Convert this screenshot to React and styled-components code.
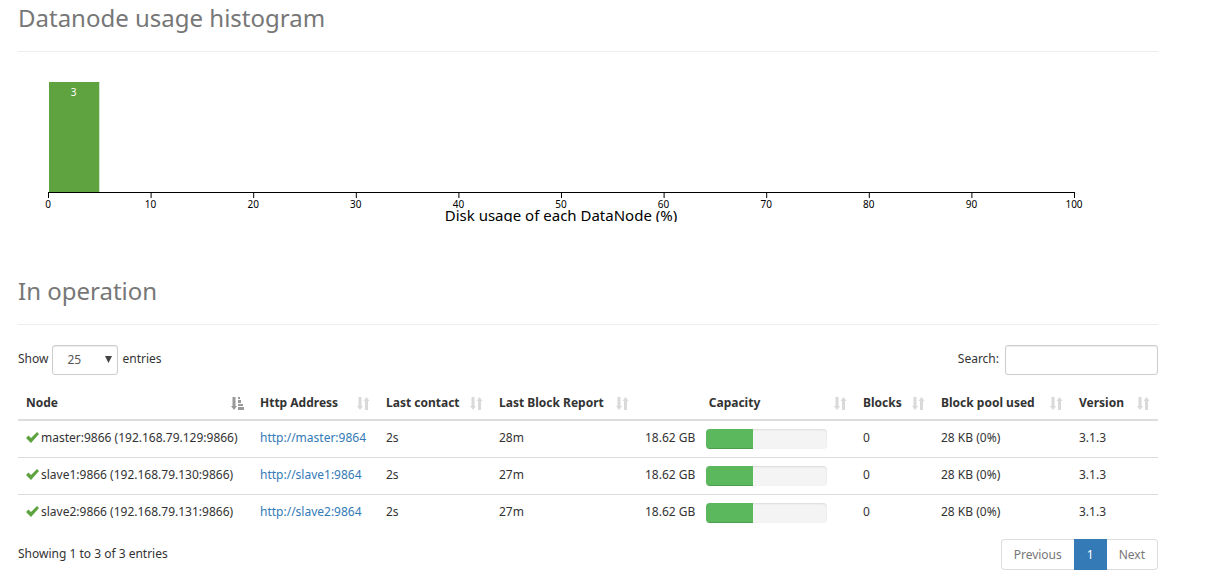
import React, { useState } from "react";
import styled, { createGlobalStyle } from "styled-components";

const GlobalStyle = createGlobalStyle`
  *, *::before, *::after { box-sizing: border-box; }
  body {
    margin: 0;
    background: #fff;
    color: #333;
    font-family: "Noto Sans", "Open Sans", sans-serif;
    font-size: 12px;
    line-height: 20px;
  }
  button, input, select { font: inherit; color: inherit; margin: 0; }
`;

const Page = styled.main`
  padding: 0 73px 6px 18px;
`;

const PageHeader = styled.h1`
  margin: 0 0 20px;
  padding-bottom: 16px;
  border-bottom: 1px solid #eee;
  color: #777;
  font-size: 24px;
  font-weight: 400;
  line-height: 35px;
`;

const ChartArea = styled.figure`
  margin: 0 0 51px;
`;

const Chart = styled.svg`
  display: block;
  width: 100%;
  height: 150px;
  overflow: hidden;
`;

const Plot = styled.svg`
  overflow: visible;
`;

const TickText = styled.text`
  font-size: 10px;
  text-anchor: middle;
  fill: ${(p) => (p.$light ? "#fff" : "#000")};
`;

const AxisTitle = styled.text`
  font-size: 15px;
  text-anchor: middle;
  fill: #000;
`;

const Controls = styled.div`
  display: flex;
  justify-content: space-between;
  align-items: flex-start;
`;

const ControlLabel = styled.label`
  display: flex;
  align-items: flex-start;
  gap: ${(p) => p.$gap}px;
  line-height: 28px;
`;

const SelectBox = styled.span`
  position: relative;
  display: inline-flex;
`;

const LengthSelect = styled.select`
  appearance: none;
  width: 66px;
  height: 30px;
  padding: 0 14px;
  border: 1px solid #ccc;
  border-radius: 3px;
  background: #fff;
  color: #555;
  box-shadow: inset 0 1px 1px rgba(0, 0, 0, 0.075);
`;

const Caret = styled.svg`
  position: absolute;
  right: 6px;
  top: 11px;
  width: 7px;
  height: 7px;
  fill: #444;
  pointer-events: none;
`;

const SearchInput = styled.input`
  width: 153px;
  height: 30px;
  padding: 4px 10px;
  border: 1px solid #ccc;
  border-radius: 3px;
  background: #fff;
  box-shadow: inset 0 1px 1px rgba(0, 0, 0, 0.075);
`;

const Table = styled.table`
  width: 100%;
  margin: 8px 0;
  table-layout: fixed;
  border-collapse: collapse;
`;

const Th = styled.th`
  padding: 10px 8px 6px;
  border-bottom: 2px solid #ddd;
  text-align: left;
  font-weight: 700;
  line-height: 20px;
  white-space: nowrap;
`;

const SortButton = styled.button`
  display: flex;
  align-items: center;
  justify-content: space-between;
  width: 100%;
  padding: 0;
  border: 0;
  background: none;
  cursor: pointer;
  line-height: 20px;
`;

const SortTitle = styled.span`
  flex: 1;
  padding-right: ${(p) => (p.$center ? 10 : 0)}px;
  text-align: ${(p) => (p.$center ? "center" : "left")};
`;

const SortSvg = styled.svg`
  flex: none;
  width: 13px;
  height: 13px;
  fill: ${(p) => (p.$active ? "#999" : "#d9d9d9")};
`;

const Td = styled.td`
  padding: 7px 8px;
  border-top: 1px solid #ddd;
  vertical-align: top;
  white-space: nowrap;
  line-height: 20px;
`;

const NodeName = styled.span`
  display: flex;
  align-items: center;
  gap: 2px;
`;

const CheckSvg = styled.svg`
  flex: none;
  width: 13px;
  height: 13px;
  fill: #5fa341;
`;

const NodeLink = styled.a`
  color: #337ab7;
  text-decoration: none;
`;

const Capacity = styled.div`
  display: flex;
  align-items: flex-start;
  gap: 11px;
  padding-right: 20px;
`;

const CapacityText = styled.span`
  flex: none;
`;

const Meter = styled.div`
  flex: 1;
  height: 20px;
  margin-top: 1px;
  margin-bottom: 1px;
  overflow: hidden;
  border-radius: 4px;
  background: #f4f4f4;
  box-shadow: inset 0 1px 2px rgba(0, 0, 0, 0.1);
`;

const MeterFill = styled.div`
  height: 100%;
  background: #5cb85c;
  box-shadow: inset 0 -1px 0 rgba(0, 0, 0, 0.15);
`;

const Footer = styled.footer`
  display: flex;
  justify-content: space-between;
  align-items: flex-start;
`;

const Info = styled.div`
  padding-top: 5px;
`;

const Pagination = styled.nav`
  display: flex;
  height: 31px;
`;

const PageButton = styled.button`
  padding: 0 12px;
  border: 1px solid ${(p) => (p.$active ? "#337ab7" : "#ddd")};
  border-left-width: ${(p) => (p.$edge === "right" ? 0 : 1)}px;
  border-right-width: ${(p) => (p.$edge === "left" ? 0 : 1)}px;
  border-radius: ${(p) =>
    p.$edge === "left" ? "4px 0 0 4px" : p.$edge === "right" ? "0 4px 4px 0" : "0"};
  background: ${(p) => (p.$active ? "#337ab7" : "#fff")};
  color: ${(p) => (p.$active ? "#fff" : "#777")};
`;

const columns = [
  { title: "Node", width: 234, active: true },
  { title: "Http Address", width: 126 },
  { title: "Last contact", width: 113 },
  { title: "Last Block Report", width: 146 },
  { title: "Capacity", width: 218, center: true },
  { title: "Blocks", width: 78 },
  { title: "Block pool used", width: 138 },
  { title: "Version", width: 87 },
];

const nodes = [
  { name: "master", ip: "192.168.79.129", report: "28m" },
  { name: "slave1", ip: "192.168.79.130", report: "27m" },
  { name: "slave2", ip: "192.168.79.131", report: "27m" },
].map((n) => ({ ...n, contact: "2s", capacity: "18.62 GB", used: 39, blocks: 0, pool: "28 KB (0%)", version: "3.1.3" }));

const ticks = [0, 10, 20, 30, 40, 50, 60, 70, 80, 90, 100];

function SortIcon({ active }) {
  return (
    <SortSvg $active={active} viewBox="0 0 13 13" aria-hidden="true">
      <path d="M1.500 0h3v9H6l-3 4-3-4h1.500z" />
      {active ? (
        <path d="M7 0h2v2H7zM7 3h3v3H7zM7 7h5v2H7zM7 10h6v3H7z" />
      ) : (
        <path d="M8 13h3V4h1.500l-3-4-3 4H8z" />
      )}
    </SortSvg>
  );
}

function Histogram() {
  return (
    <ChartArea>
      <Chart role="img" aria-label="Datanode usage histogram">
        <Plot x="30" y="0" width="90%" height="150">
          <rect x="1" y="10" width="4.9%" height="110" fill="#5fa341" />
          <TickText $light x="2.5%" y="24">3</TickText>
          <rect x="0" y="120" width="100%" height="1" />
          {ticks.map((t) => (
            <React.Fragment key={t}>
              <line x1={`${t}%`} x2={`${t}%`} y1="120" y2="126" stroke="#000" transform="translate(.5 0)" />
              <TickText x={`${t}%`} y="136">{t}</TickText>
            </React.Fragment>
          ))}
          <AxisTitle x="50%" y="149">Disk usage of each DataNode (%)</AxisTitle>
        </Plot>
      </Chart>
    </ChartArea>
  );
}

export default function App() {
  const [length, setLength] = useState("25");
  const [query, setQuery] = useState("");
  const rows = nodes.filter((n) => `${n.name} ${n.ip}`.includes(query));

  return (
    <>
      <GlobalStyle />
      <Page>
        <PageHeader>Datanode usage histogram</PageHeader>
        <Histogram />
        <PageHeader>In operation</PageHeader>
        <Controls>
          <ControlLabel $gap={4} htmlFor="length">
            Show
            <SelectBox>
              <LengthSelect id="length" value={length} onChange={(e) => setLength(e.target.value)}>
                <option>25</option>
                <option>50</option>
                <option>100</option>
              </LengthSelect>
              <Caret viewBox="0 0 7 7" aria-hidden="true">
                <path d="M0 0h7L3.500 7z" />
              </Caret>
            </SelectBox>
            entries
          </ControlLabel>
          <ControlLabel $gap={6} htmlFor="search">
            Search:
            <SearchInput id="search" type="search" value={query} onChange={(e) => setQuery(e.target.value)} />
          </ControlLabel>
        </Controls>
        <Table>
          <colgroup>
            {columns.map((c) => (
              <col key={c.title} width={c.width} />
            ))}
          </colgroup>
          <thead>
            <tr>
              {columns.map((c) => (
                <Th key={c.title} scope="col">
                  <SortButton type="button">
                    <SortTitle $center={c.center}>{c.title}</SortTitle>
                    <SortIcon active={c.active} />
                  </SortButton>
                </Th>
              ))}
            </tr>
          </thead>
          <tbody>
            {rows.map((n) => (
              <tr key={n.name}>
                <Td>
                  <NodeName>
                    <CheckSvg viewBox="0 0 13 13" aria-hidden="true">
                      <path d="M0 6l2.500-2.500L5 6l6-6 2 2-8 9z" />
                    </CheckSvg>
                    {`${n.name}:9866 (${n.ip}:9866)`}
                  </NodeName>
                </Td>
                <Td><NodeLink href={`http://${n.name}:9864`}>{`http://${n.name}:9864`}</NodeLink></Td>
                <Td>{n.contact}</Td>
                <Td>{n.report}</Td>
                <Td>
                  <Capacity>
                    <CapacityText>{n.capacity}</CapacityText>
                    <Meter>
                      <MeterFill style={{ width: `${n.used}%` }} />
                    </Meter>
                  </Capacity>
                </Td>
                <Td>{n.blocks}</Td>
                <Td>{n.pool}</Td>
                <Td>{n.version}</Td>
              </tr>
            ))}
          </tbody>
        </Table>
        <Footer>
          <Info>Showing 1 to 3 of 3 entries</Info>
          <Pagination aria-label="Table pages">
            <PageButton type="button" $edge="left">Previous</PageButton>
            <PageButton type="button" $active>1</PageButton>
            <PageButton type="button" $edge="right">Next</PageButton>
          </Pagination>
        </Footer>
      </Page>
    </>
  );
}
